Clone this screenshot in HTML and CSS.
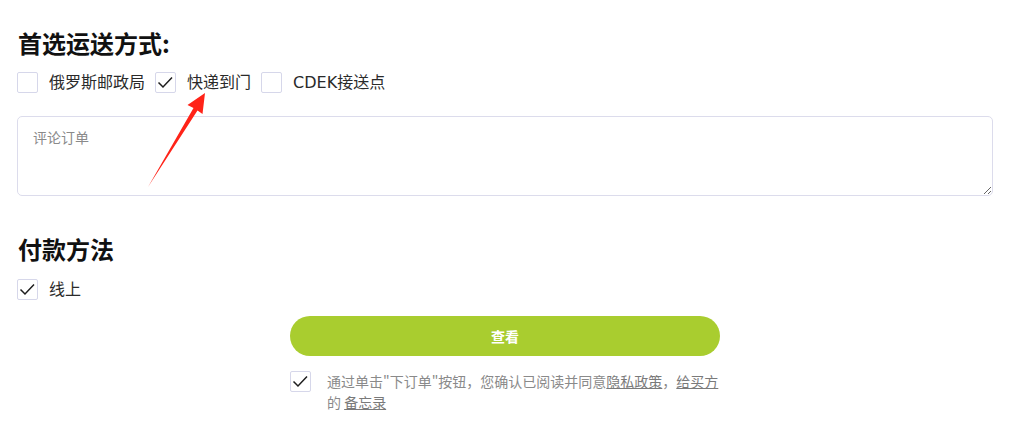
FILE: index.html
```html
<!DOCTYPE html>
<html lang="zh-CN">
<head>
<meta charset="UTF-8">
<meta name="viewport" content="width=device-width, initial-scale=1.0">
<title>下订单</title>
<link rel="stylesheet" href="styles.css">
</head>
<body>

<div class="container">
    <h2 class="title">首选运送方式:</h2>
    <div class="options">
        <label class="option">
            <span class="box"></span>
            <span class="label-text">俄罗斯邮政局</span>
        </label>
        <label class="option">
            <span class="box">
                <svg width="21" height="21" viewBox="0 0 21 21"><polyline points="3.5,10.5 8,15 17,5.5" fill="none" stroke="#1e1e1e" stroke-width="1.5"/></svg>
            </span>
            <span class="label-text">快递到门</span>
        </label>
        <label class="option">
            <span class="box"></span>
            <span class="label-text">CDEK接送点</span>
        </label>
    </div>

    <textarea class="comment" placeholder="评论订单"></textarea>

    <h2 class="title title-pay">付款方法</h2>
    <div class="options">
        <label class="option">
            <span class="box">
                <svg width="21" height="21" viewBox="0 0 21 21"><polyline points="3.5,10.5 8,15 17,5.5" fill="none" stroke="#1e1e1e" stroke-width="1.5"/></svg>
            </span>
            <span class="label-text">线上</span>
        </label>
    </div>

    <div class="submit">
        <button class="btn" type="button">查看</button>
        <div class="agree">
            <span class="box">
                <svg width="21" height="21" viewBox="0 0 21 21"><polyline points="3.5,10.5 8,15 17,5.5" fill="none" stroke="#1e1e1e" stroke-width="1.5"/></svg>
            </span>
            <p class="agree-text">通过单击"下订单"按钮，您确认已阅读并同意<a href="#">隐私政策</a>，<a href="#">给买方</a><br>的 <a href="#">备忘录</a></p>
        </div>
    </div>
</div>

<!-- annotation arrow drawn over the page -->
<svg class="arrow" width="1030" height="426" viewBox="0 0 1030 426">
    <polygon points="205,93 202.5,114 197.5,110.5 148,187 193.5,108 187.5,105" fill="#ff2318"/>
</svg>

</body>
</html>
```

FILE: styles.css
```css
body {
    margin: 0;
    font-family: "Open Sans", "Noto Sans CJK SC", sans-serif;
    color: #222;
    background: #fff;
}
.container {
    padding: 28px 37px 0 17px;
}
.title {
    margin: 0 0 0 1px;
    font-family: "Noto Sans CJK SC", sans-serif;
    font-size: 24px;
    line-height: 30px;
    font-weight: 700;
    color: #111;
}
.title-pay {
    margin-top: 38px;
}
.options {
    display: flex;
    gap: 10px;
    margin-top: 14px;
}
.title-pay + .options {
    margin-top: 15px;
}
.option {
    display: flex;
    align-items: center;
    gap: 11px;
    cursor: pointer;
}
.box {
    display: block;
    flex: none;
    width: 21px;
    height: 21px;
    box-sizing: border-box;
    border: 1px solid #d6d7ea;
    border-radius: 2px;
    background: #fff;
}
.box svg {
    display: block;
    margin: -1px;
}
.label-text {
    font-family: "DejaVu Sans", "Noto Sans CJK SC", sans-serif;
    font-size: 16px;
    line-height: 21px;
    color: #2a2a2a;
}
.comment {
    display: block;
    width: 100%;
    height: 80px;
    margin-top: 23px;
    padding: 10px 15px;
    box-sizing: border-box;
    border: 1px solid #dcdcec;
    border-radius: 5px;
    font-family: "Noto Sans CJK SC", sans-serif;
    font-size: 14px;
    line-height: 20px;
    outline: none;
}
.comment::placeholder {
    color: #8a8a8a;
}
.submit {
    width: 430px;
    margin: 16px auto 0;
}
.btn {
    display: block;
    width: 100%;
    height: 40px;
    border: none;
    border-radius: 20px;
    background-color: #a9cd2f;
    color: #fff;
    font-family: "Noto Sans CJK SC", sans-serif;
    font-size: 14px;
    font-weight: 700;
    cursor: pointer;
}
.agree {
    display: flex;
    gap: 16px;
    margin-top: 15px;
}
.agree-text {
    margin: 0;
    font-family: "Noto Sans CJK SC", sans-serif;
    font-size: 14px;
    line-height: 21px;
    color: #8a8a8a;
}
.agree-text a {
    color: #7a7a7a;
    text-decoration: underline;
}
.arrow {
    position: absolute;
    left: 0;
    top: 0;
    pointer-events: none;
}
```
